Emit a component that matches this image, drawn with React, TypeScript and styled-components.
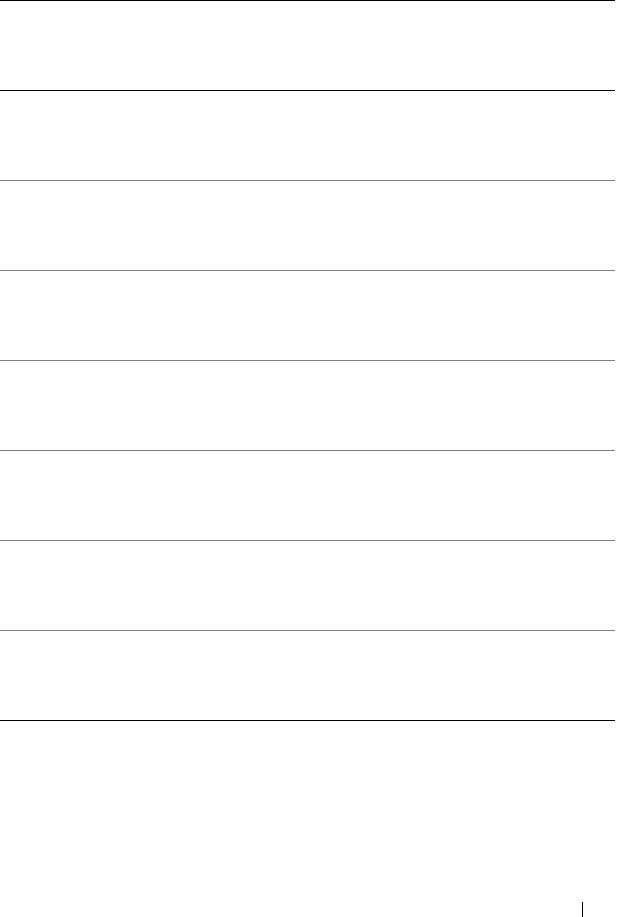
import React from 'react';
import styled, { createGlobalStyle } from 'styled-components';

const GlobalStyle = createGlobalStyle`
  html, body {
    margin: 0;
    padding: 0;
    background: #ffffff;
    font-family: "Liberation Serif", "Times New Roman", serif;
    color: #000000;
  }
`;

const Page = styled.div`
  width: 641px;
  height: 917px;
  overflow: hidden;
  display: flex;
  flex-direction: column;
  background: #ffffff;
`;

const Table = styled.div`
  width: 615px;
  border-top: 1px solid #000000;
  display: flex;
  flex-direction: column;
`;

const Row = styled.div<{ $strong?: boolean }>`
  height: 89px;
  display: grid;
  grid-template-columns: 1fr 2fr;
  border-bottom: 1px solid ${(p) => (p.$strong ? '#000000' : '#808080')};
`;

const Cell = styled.div`
  padding: 8px 10px;
  font-size: 13px;
  line-height: 16px;
`;

const Footer = styled.div`
  margin-top: auto;
  height: 15px;
  display: flex;
  justify-content: flex-end;
  padding-right: 58px;
`;

const PageMark = styled.span`
  width: 1px;
  height: 15px;
  background: #000000;
`;

const rows = [0, 1, 2, 3, 4, 5, 6, 7];

function App() {
  return (
    <Page>
      <GlobalStyle />
      <Table>
        {rows.map((r) => (
          <Row key={r} $strong={r === 0 || r === rows.length - 1}>
            <Cell />
            <Cell />
          </Row>
        ))}
      </Table>
      <Footer>
        <PageMark />
      </Footer>
    </Page>
  );
}

export default App;
